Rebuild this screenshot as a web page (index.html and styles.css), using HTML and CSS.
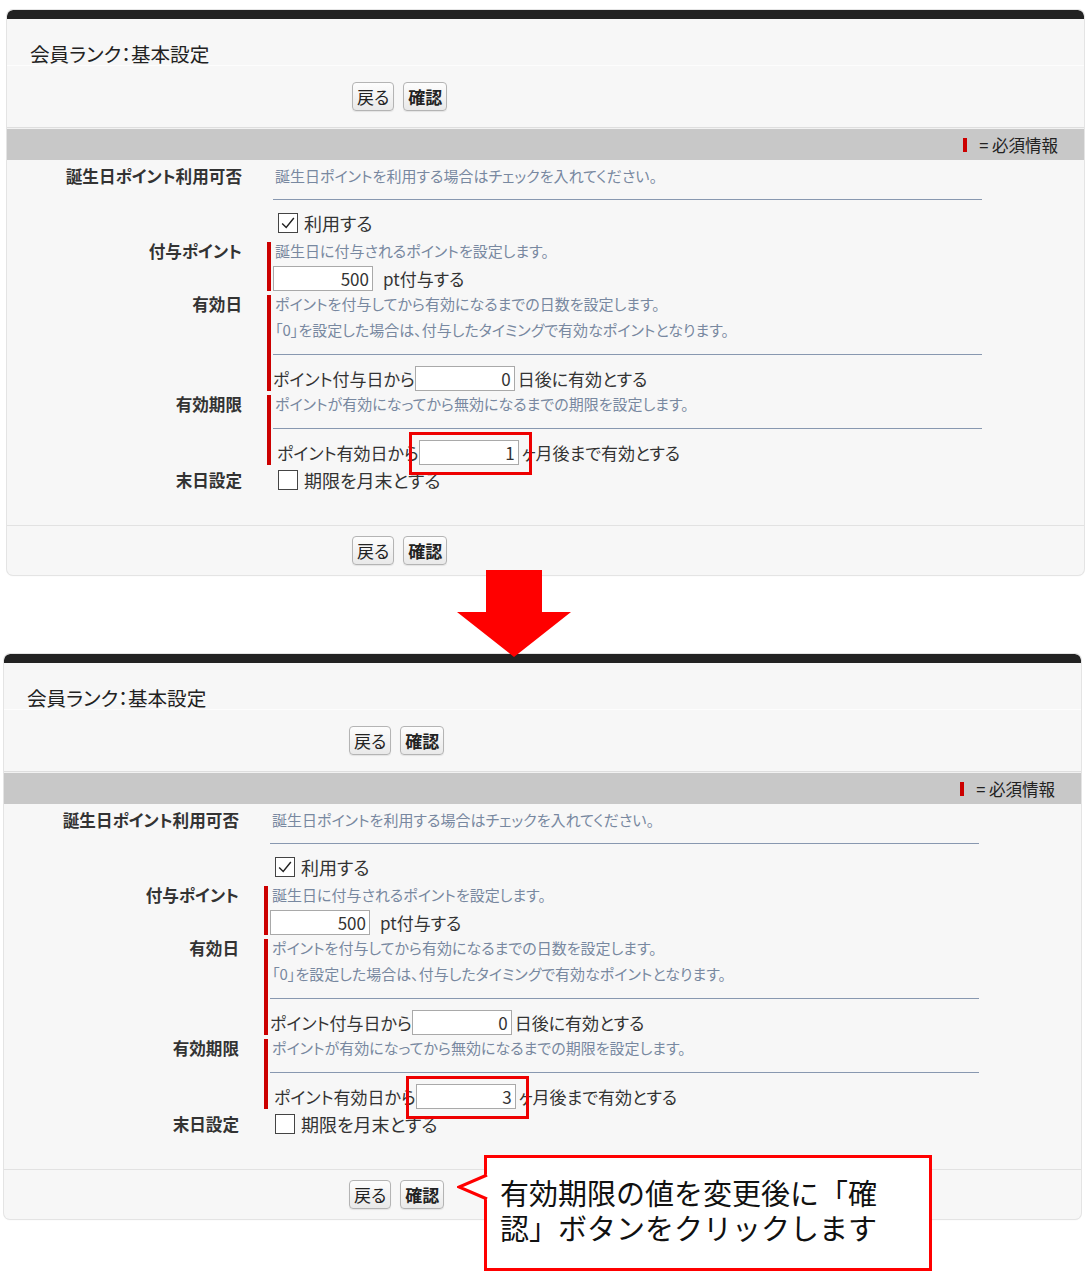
FILE: index.html
```html
<!DOCTYPE html>
<html lang="ja">
<head>
  <meta charset="UTF-8" />
  <title>会員ランク：基本設定</title>
  <link rel="stylesheet" href="styles.css">
</head>
<body>
  <div class="shot first">
    <div class="panel">
      <div class="panel-top"></div>
      <h1 class="panel-title">会員ランク：基本設定</h1>
      <div class="actions actions-top">
        <button class="btn">戻る</button><button class="btn btn-strong">確認</button>
      </div>
      <div class="legend"><span class="req-mark"></span>= 必須情報</div>
      <div class="form">
        <div class="row row-first">
          <div class="label">誕生日ポイント利用可否</div>
          <div class="field">
            <div class="help sep">誕生日ポイントを利用する場合はチェックを入れてください。</div>
            <div class="check"><span class="box"><svg viewBox="0 0 20 20" width="18" height="18"><path d="M3.5 10.5 L8 15 L16.5 4.5" fill="none" stroke="#222" stroke-width="1.6"/></svg></span>利用する</div>
          </div>
        </div>
        <div class="row">
          <div class="label">付与ポイント</div>
          <div class="field required">
            <div class="help">誕生日に付与されるポイントを設定します。</div>
            <div class="inline first-input"><span class="input">500</span><span class="after">pt付与する</span></div>
          </div>
        </div>
        <div class="row">
          <div class="label">有効日</div>
          <div class="field required">
            <div class="help">ポイントを付与してから有効になるまでの日数を設定します。</div>
            <div class="help help-next sep">「0」を設定した場合は、付与したタイミングで有効なポイントとなります。</div>
            <div class="inline"><span class="before">ポイント付与日から</span><span class="input">0</span><span class="after">日後に有効とする</span></div>
          </div>
        </div>
        <div class="row">
          <div class="label">有効期限</div>
          <div class="field required">
            <div class="help sep">ポイントが有効になってから無効になるまでの期限を設定します。</div>
            <div class="inline shift"><span class="before">ポイント有効日から</span><span class="input-wrap"><span class="input">1</span><span class="mark"></span></span><span class="after">ヶ月後まで有効とする</span></div>
          </div>
        </div>
        <div class="row row-last">
          <div class="label">末日設定</div>
          <div class="field">
            <div class="check"><span class="box"></span>期限を月末とする</div>
          </div>
        </div>
      </div>
      <div class="actions actions-bottom">
        <button class="btn">戻る</button><button class="btn btn-strong">確認</button>
      </div>
    </div>
  </div>

  <div class="arrow">
    <svg viewBox="0 0 114 87" width="114" height="87"><polygon points="29,0 85,0 85,42 114,42 57,87 0,42 29,42" fill="#ff0000"/></svg>
  </div>

  <div class="shot second">
    <div class="panel">
      <div class="panel-top"></div>
      <h1 class="panel-title">会員ランク：基本設定</h1>
      <div class="actions actions-top">
        <button class="btn">戻る</button><button class="btn btn-strong">確認</button>
      </div>
      <div class="legend"><span class="req-mark"></span>= 必須情報</div>
      <div class="form">
        <div class="row row-first">
          <div class="label">誕生日ポイント利用可否</div>
          <div class="field">
            <div class="help sep">誕生日ポイントを利用する場合はチェックを入れてください。</div>
            <div class="check"><span class="box"><svg viewBox="0 0 20 20" width="18" height="18"><path d="M3.5 10.5 L8 15 L16.5 4.5" fill="none" stroke="#222" stroke-width="1.6"/></svg></span>利用する</div>
          </div>
        </div>
        <div class="row">
          <div class="label">付与ポイント</div>
          <div class="field required">
            <div class="help">誕生日に付与されるポイントを設定します。</div>
            <div class="inline first-input"><span class="input">500</span><span class="after">pt付与する</span></div>
          </div>
        </div>
        <div class="row">
          <div class="label">有効日</div>
          <div class="field required">
            <div class="help">ポイントを付与してから有効になるまでの日数を設定します。</div>
            <div class="help help-next sep">「0」を設定した場合は、付与したタイミングで有効なポイントとなります。</div>
            <div class="inline"><span class="before">ポイント付与日から</span><span class="input">0</span><span class="after">日後に有効とする</span></div>
          </div>
        </div>
        <div class="row">
          <div class="label">有効期限</div>
          <div class="field required">
            <div class="help sep">ポイントが有効になってから無効になるまでの期限を設定します。</div>
            <div class="inline shift"><span class="before">ポイント有効日から</span><span class="input-wrap"><span class="input">3</span><span class="mark"></span></span><span class="after">ヶ月後まで有効とする</span></div>
          </div>
        </div>
        <div class="row row-last">
          <div class="label">末日設定</div>
          <div class="field">
            <div class="check"><span class="box"></span>期限を月末とする</div>
          </div>
        </div>
      </div>
      <div class="actions actions-bottom">
        <button class="btn">戻る</button><button class="btn btn-strong">確認</button>
      </div>
    </div>

    <div class="callout">
      <svg class="callout-tip" viewBox="0 0 34 34" width="34" height="34"><polygon points="2,16 30,3 34,3 34,29 30,29" fill="#fff"/><polyline points="30,4 2,16 30,28" fill="none" stroke="#ff0000" stroke-width="3"/></svg>
      <p>有効期限の値を変更後に「確<br>認」ボタンをクリックします</p>
    </div>
  </div>
</body>
</html>
```

FILE: styles.css
```css
* {
  box-sizing: border-box;
}
html, body {
  min-height: 1273px;
}
body {
  margin: 0;
  background: #fff;
  color: #333;
  font-family: "Noto Sans CJK JP", "Noto Sans", sans-serif;
  font-feature-settings: "palt";
}
.shot {
  width: 1077px;
}
.shot.first {
  margin: 10px 0 0 7px;
}
.shot.second {
  margin-left: 4px;
  position: relative;
}
.panel {
  background: #f7f7f7;
  border-radius: 6px;
  box-shadow: 0 0 0 1px #e4e4e4, 0 1px 2px rgba(0, 0, 0, 0.06);
  overflow: hidden;
}
.panel-top {
  height: 9px;
  background: #222;
  border-radius: 6px 6px 0 0;
}
.panel-title {
  margin: 0;
  padding: 23px 0 0 23px;
  height: 47px;
  font-size: 19.6px;
  line-height: 24px;
  font-weight: normal;
  color: #222;
  border-bottom: 1px solid #fdfdfd;
}
.actions {
  display: flex;
  gap: 9px;
  padding-left: 345px;
}
.actions-top {
  padding-top: 16px;
  padding-bottom: 16px;
}
.actions-bottom {
  border-top: 1px solid #e2e2e2;
  padding-top: 10px;
  padding-bottom: 10px;
}
.btn {
  height: 29px;
  padding: 0 4px;
  font-family: inherit;
  font-feature-settings: "palt";
  font-size: 17px;
  line-height: 27px;
  color: #222;
  background: linear-gradient(#fdfdfd, #e9e9e9);
  border: 1px solid #b4b4b4;
  border-radius: 4px;
  box-shadow: 0 1px 1px rgba(0, 0, 0, 0.08);
}
.btn-strong {
  font-weight: bold;
  padding: 0 4px;
}
.legend {
  height: 33px;
  border-top: 1px solid #dedede;
  background: #c8c8c8;
  box-shadow: inset 0 1px 0 #f2f2f2;
  display: flex;
  align-items: center;
  justify-content: flex-end;
  padding: 2px 26px 0 0;
  font-size: 16.5px;
  color: #222;
}
.req-mark {
  width: 4px;
  height: 14px;
  background: #cc0000;
  margin-right: 12px;
}
.form {
  padding: 7px 0 34px;
}
.row {
  display: grid;
  grid-template-columns: 235px 715px;
  column-gap: 25px;
  margin-top: 4px;
}
.row-first {
  margin-top: 0;
}
.row.row-first + .row {
  margin-top: 8px;
}
.label {
  text-align: right;
  font-size: 16.6px;
  font-weight: bold;
  line-height: 18px;
  color: #333;
}
.row-last .label {
  padding-top: 2px;
}
.field {
  border-left: 4px solid transparent;
  padding-left: 2px;
  width: 715px;
}
.field.required {
  border-left-color: #cc0000;
}
.help {
  font-size: 15px;
  line-height: 18px;
  color: #7888a0;
  padding-left: 2px;
}
.help-next {
  margin-top: 8px;
}
.help.sep {
  border-bottom: 1px solid #8898b0;
  padding-bottom: 14px;
}
.row:not(.row-first) .help.sep {
  padding-bottom: 15px;
}
.check {
  display: flex;
  align-items: center;
  margin-top: 12px;
  padding-left: 5px;
  font-size: 18px;
  line-height: 22px;
  color: #333;
}
.row-last .check {
  margin-top: 0;
}
.box {
  width: 20px;
  height: 20px;
  border: 1px solid #444;
  background: #fff;
  margin-right: 6px;
  display: flex;
  align-items: center;
  justify-content: center;
}
.inline {
  display: flex;
  align-items: center;
  margin-top: 11px;
  font-size: 17px;
  line-height: 25px;
  color: #333;
}
.inline.first-input {
  margin-top: 6px;
}
.inline.shift {
  padding-left: 4px;
}
.input {
  display: block;
  width: 100px;
  height: 25px;
  background: #fff;
  border: 1px solid #a9a9a9;
  text-align: right;
  padding-right: 3px;
  font-size: 17px;
  line-height: 23px;
}
.before {
  margin-right: 0;
}
.after {
  margin-left: 3px;
}
.first-input .after {
  margin-left: 10px;
}
.input-wrap {
  position: relative;
}
.mark {
  position: absolute;
  left: -10px;
  top: -8px;
  width: 123px;
  height: 43px;
  border: 3px solid #ee0000;
}
.arrow {
  position: relative;
  z-index: 2;
  width: 114px;
  height: 87px;
  margin: -5px 0 -3px 457px;
}
.arrow svg {
  display: block;
}
.callout {
  position: absolute;
  left: 480px;
  top: 501px;
  width: 448px;
  height: 116px;
  background: #fff;
  border: 3px solid #ff0000;
  z-index: 3;
}
.callout-tip {
  position: absolute;
  left: -30px;
  top: 13px;
  display: block;
}
.callout p {
  margin: 0;
  padding: 17px 0 0 13px;
  font-size: 29px;
  line-height: 35px;
  color: #111;
  font-feature-settings: normal;
}
```
